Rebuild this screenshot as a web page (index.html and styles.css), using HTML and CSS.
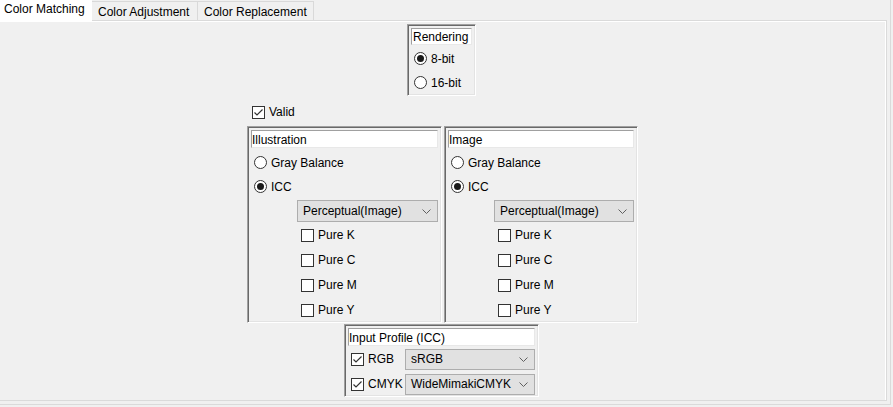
FILE: index.html
```html
<!DOCTYPE html>
<html>
<head>
<meta charset="utf-8">
<link rel="stylesheet" href="styles.css">
</head>
<body>
<div class="frame">
  <div class="tabs">
    <div class="tab active">Color Matching</div>
    <div class="tab t2">Color Adjustment</div>
    <div class="tab t3">Color Replacement</div>
  </div>
  <div class="panel">
    <div class="group rendering">
      <div class="title">Rendering</div>
      <div class="opt"><span class="radio on"></span>8-bit</div>
      <div class="opt"><span class="radio"></span>16-bit</div>
    </div>

    <div class="valid"><span class="check on"><svg viewBox="0 0 11 11" width="11" height="11"><polyline points="1.5,5.5 4,8 9.5,2.5" /></svg></span>Valid</div>

    <div class="pair">
      <div class="group mode">
        <div class="title">Illustration</div>
        <div class="opt"><span class="radio"></span>Gray Balance</div>
        <div class="opt"><span class="radio on"></span>ICC</div>
        <div class="select intent"><span>Perceptual(Image)</span><svg class="chev" viewBox="0 0 9 5" width="9" height="5"><polyline points="0.5,0.5 4.5,4.5 8.5,0.5" /></svg></div>
        <div class="opt pure"><span class="check"></span>Pure K</div>
        <div class="opt pure"><span class="check"></span>Pure C</div>
        <div class="opt pure"><span class="check"></span>Pure M</div>
        <div class="opt pure"><span class="check"></span>Pure Y</div>
      </div>
      <div class="group mode narrow">
        <div class="title">Image</div>
        <div class="opt"><span class="radio"></span>Gray Balance</div>
        <div class="opt"><span class="radio on"></span>ICC</div>
        <div class="select intent"><span>Perceptual(Image)</span><svg class="chev" viewBox="0 0 9 5" width="9" height="5"><polyline points="0.5,0.5 4.5,4.5 8.5,0.5" /></svg></div>
        <div class="opt pure"><span class="check"></span>Pure K</div>
        <div class="opt pure"><span class="check"></span>Pure C</div>
        <div class="opt pure"><span class="check"></span>Pure M</div>
        <div class="opt pure"><span class="check"></span>Pure Y</div>
      </div>
    </div>

    <div class="group profile">
      <div class="title">Input Profile (ICC)</div>
      <div class="prow">
        <span class="check on"><svg viewBox="0 0 11 11" width="11" height="11"><polyline points="1.5,5.5 4,8 9.5,2.5" /></svg></span>
        <span class="plabel">RGB</span>
        <div class="select"><span>sRGB</span><svg class="chev" viewBox="0 0 9 5" width="9" height="5"><polyline points="0.5,0.5 4.5,4.5 8.5,0.5" /></svg></div>
      </div>
      <div class="prow second">
        <span class="check on"><svg viewBox="0 0 11 11" width="11" height="11"><polyline points="1.5,5.5 4,8 9.5,2.5" /></svg></span>
        <span class="plabel">CMYK</span>
        <div class="select"><span>WideMimakiCMYK</span><svg class="chev" viewBox="0 0 9 5" width="9" height="5"><polyline points="0.5,0.5 4.5,4.5 8.5,0.5" /></svg></div>
      </div>
    </div>
  </div>
</div>
</body>
</html>
```

FILE: styles.css
```css
* { box-sizing: border-box; }

html, body {
  margin: 0;
  padding: 0;
  background: #f0f0f0;
}

body {
  font-family: "Liberation Sans", Arial, sans-serif;
  font-size: 12px;
  color: #000;
  width: 893px;
  height: 407px;
  overflow: hidden;
}

.frame {
  width: 891px;
  height: 405px;
  border-right: 1px solid #dadada;
  border-bottom: 1px solid #dadada;
}

.tabs {
  display: flex;
  height: 20px;
  align-items: flex-start;
}

.tab {
  height: 19px;
  margin-top: 1px;
  line-height: 14px;
  padding-top: 3px;
  border-top: 1px solid #d9d9d9;
  border-right: 1px solid #d9d9d9;
  background: #f0f0f0;
  white-space: nowrap;
}

.tab.active {
  position: relative;
  z-index: 1;
  margin-top: 0;
  height: 22px;
  width: 92px;
  padding-left: 4px;
  padding-top: 2px;
  background: #fff;
  border: none;
}

.tab.t2 { width: 106px; padding-left: 6px; }
.tab.t3 { width: 116px; padding-left: 6px; }

.panel {
  width: 887px;
  height: 381px;
  border-top: 1px solid #dadada;
  border-right: 1px solid #dadada;
  border-bottom: 1px solid #dadada;
  box-shadow: inset 0 1px 0 #fff, inset -1px 0 0 #fff;
  display: flex;
  flex-direction: column;
  align-items: center;
  padding-top: 3px;
  padding-right: 3px;
  overflow: hidden;
}

.group {
  border: 1px solid;
  border-color: #a0a0a0 #fff #fff #a0a0a0;
  box-shadow: inset 1px 1px 0 #696969, inset -1px -1px 0 #e3e3e3;
  padding: 3px 3px 1px 3px;
  display: flex;
  flex-direction: column;
}

.title {
  height: 18px;
  line-height: 16px;
  padding-top: 1px;
  padding-left: 0;
  background: #fff;
  border: 1px solid;
  border-color: #a0a0a0 #e8e8e8 #e8e8e8 #a0a0a0;
  white-space: nowrap;
}

.rendering { width: 69px; }
.rendering .title { height: 17px; line-height: 15px; margin-bottom: 1px; padding-left: 1px; }

.opt {
  height: 24px;
  display: flex;
  align-items: center;
  padding-left: 3px;
  padding-top: 1px;
  white-space: nowrap;
}

.radio {
  width: 13px;
  height: 13px;
  border: 1px solid #333;
  border-radius: 50%;
  background: #fff;
  margin-right: 4px;
  display: flex;
  align-items: center;
  justify-content: center;
  flex: none;
}

.radio.on::after {
  content: "";
  width: 7px;
  height: 7px;
  border-radius: 50%;
  background: #1a1a1a;
}

.check {
  width: 13px;
  height: 13px;
  border: 1px solid #333;
  background: #fff;
  margin-right: 4px;
  display: flex;
  align-items: center;
  justify-content: center;
  flex: none;
}

.check svg polyline {
  fill: none;
  stroke: #333;
  stroke-width: 1.2;
}

.valid {
  width: 391px;
  height: 16px;
  margin-top: 8px;
  margin-bottom: 6px;
  margin-left: 2px;
  padding-left: 5px;
  display: flex;
  align-items: center;
}

.pair {
  width: 391px;
  margin-left: 2px;
  display: flex;
  gap: 2px;
}

.mode { width: 195px; padding-bottom: 0; }
.mode.narrow { width: 194px; }
.mode .title { margin-bottom: 2px; }

.select {
  height: 21px;
  background: #e1e1e1;
  border: 1px solid #adadad;
  display: flex;
  align-items: center;
  justify-content: space-between;
  padding: 0 6px 0 5px;
  white-space: nowrap;
}

.chev polyline {
  fill: none;
  stroke: #606060;
  stroke-width: 1;
}

.intent {
  margin-left: 46px;
  margin-top: 2px;
  height: 22px;
}

.opt.pure {
  height: 25px;
  padding-left: 50px;
}

.profile {
  width: 195px;
  margin-top: 1px;
}

.prow {
  display: flex;
  align-items: center;
  height: 22px;
  margin-top: 2px;
  padding-left: 3px;
}

.prow.second { margin-top: 3px; }

.plabel {
  width: 35px;
  flex: none;
}

.prow .select {
  flex: 1;
  margin-left: 2px;
}
```
